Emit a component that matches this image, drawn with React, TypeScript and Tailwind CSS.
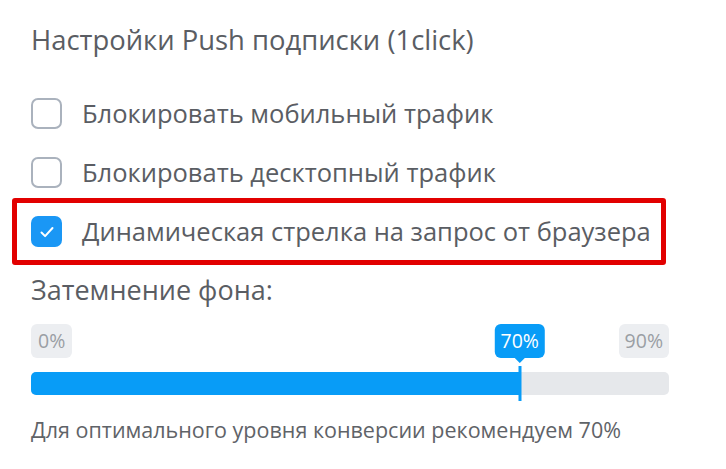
import React from 'react'

const font = { fontFamily: '"Open Sans", "Noto Sans", sans-serif' }

function Checkbox({ checked }: { checked?: boolean }) {
  if (checked) {
    return (
      <span className="flex h-[31px] w-[31px] shrink-0 items-center justify-center rounded-[7px] bg-[#1a97f5]">
        <svg width="18" height="18" viewBox="0 0 18 18" fill="none">
          <path d="M3.5 9.5l3.6 3.6L14.5 5" stroke="white" strokeWidth="2" strokeLinecap="round" strokeLinejoin="round" />
        </svg>
      </span>
    )
  }
  return <span className="h-[31px] w-[31px] shrink-0 rounded-[7px] border-2 border-[#aab2bd] bg-white" />
}

function Row({ label, checked }: { label: string; checked?: boolean }) {
  return (
    <div className="flex items-center gap-[20px]">
      <Checkbox checked={checked} />
      <span className="text-[25.5px] leading-none text-[#5a5d63]">{label}</span>
    </div>
  )
}

export default function App() {
  const value = 70
  const pos = 76.6 // thumb position on the track, %
  return (
    <div className="h-[469px] w-[726px] bg-white pl-[31px] pt-[25px] text-[#5a5d63]" style={font}>
      <div className="text-[27.4px] leading-[30px]">Настройки Push подписки (1click)</div>

      <div className="mt-[43px] flex flex-col gap-[28px]">
        <Row label="Блокировать мобильный трафик" />
        <Row label="Блокировать десктопный трафик" />
      </div>

      <div className="-ml-[19px] mt-[10px] w-[654px] rounded-[3px] border-[5px] border-[#e20000] py-[13px] pl-[14px]">
        <Row label="Динамическая стрелка на запрос от браузера" checked />
      </div>

      <div className="mt-[10px] text-[27px] leading-[30px]">Затемнение фона:</div>

      <div className="mt-[19px] w-[638px]">
        <div className="relative h-[34px]">
          <span className="absolute left-0 top-0 flex h-[34px] items-center rounded-[6px] bg-[#eceef1] px-[7px] text-[19.5px] text-[#9a9ea4]">0%</span>
          <span className="absolute right-0 top-0 flex h-[34px] items-center rounded-[6px] bg-[#eceef1] px-[6px] text-[19.5px] text-[#9a9ea4]">90%</span>
          <span className="absolute top-0 flex h-[34px] -translate-x-1/2 items-center rounded-[6px] bg-[#089cf7] px-[6px] text-[19.5px] text-white" style={{ left: `${pos}%` }}>
            {value}%
            <span className="absolute left-1/2 top-full h-0 w-0 -translate-x-1/2 border-x-[5px] border-t-[5px] border-x-transparent border-t-[#089cf7]" />
          </span>
        </div>
        <div className="relative mt-[14px] h-[23px] rounded-[5px] bg-[#e6e8eb]">
          <div className="h-full rounded-l-[5px] bg-[#089cf7]" style={{ width: `${pos}%` }} />
          <div className="absolute -top-[6px] h-[35px] w-[3px] -translate-x-1/2 bg-[#089cf7]" style={{ left: `${pos}%` }} />
        </div>
      </div>

      <div className="mt-[22px] text-[21.5px] leading-[26px] text-[#5f6368]">Для оптимального уровня конверсии рекомендуем 70%</div>
    </div>
  )
}
